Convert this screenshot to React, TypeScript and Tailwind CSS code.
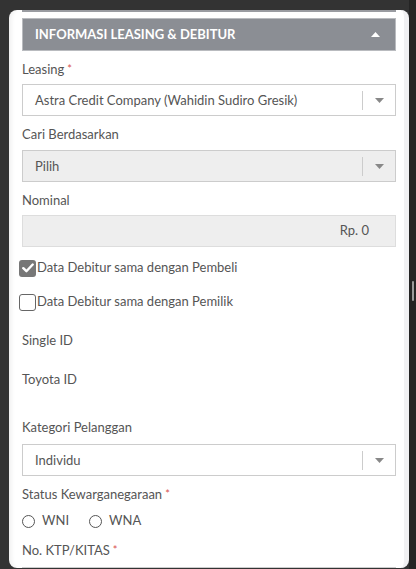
import React from "react";

const font = { fontFamily: "Lato, 'Noto Sans', sans-serif" };

function Caret() {
  return (
    <svg width="9" height="5" viewBox="0 0 9 5" className="block">
      <path d="M0 0 L9 0 L4.5 5 Z" fill="#888888" />
    </svg>
  );
}

function Label({ children, req, mt }: { children: React.ReactNode; req?: boolean; mt: string }) {
  return (
    <div className={`${mt} h-[18px] leading-[18px] text-[13px] text-[#555555]`}>
      {children}
      {req && <span className="text-[#d9534f] text-[11px] ml-[3px] align-top">*</span>}
    </div>
  );
}

function Select({ value, disabled, mt }: { value: string; disabled?: boolean; mt: string }) {
  return (
    <div
      className={`${mt} h-[32px] flex items-center border border-[#cccccc] ${disabled ? "bg-[#eeeeee]" : "bg-white"}`}
    >
      <div className="flex-1 pl-[12px] text-[13px] text-[#555555] leading-none">{value}</div>
      <div className="w-px h-[19px] bg-[#cccccc]" />
      <div className="w-[32px] flex justify-center">
        <Caret />
      </div>
    </div>
  );
}

export default function App() {
  return (
    <div className="w-[416px] h-[569px] bg-[#333333] relative overflow-hidden" style={font}>
      <div className="absolute right-0 top-0 w-[7px] h-[569px] bg-[#242424]">
        <div className="absolute left-[3px] top-[281px] w-[2px] h-[20px] bg-[#9a9a9a] rounded-sm" />
      </div>
      <div className="ml-[9px] pt-[10px]">
        <div className="w-[400px] h-[558px] bg-white rounded-[8px] border-r-[5px] border-[#f1f1f3] pl-[13px] pr-[8px] shadow-[inset_5px_0_5px_-3px_rgba(0,0,0,0.07)] overflow-hidden">
          <div className="h-[2px] bg-[#9a9ca1]" />
          <div className="mt-[6px] h-[33px] bg-[#8b8e94] flex items-center justify-between pl-[12px] pr-[15px] border border-[#b9bbbf]">
            <span className="text-white font-bold text-[13px] tracking-[0px]">INFORMASI LEASING &amp; DEBITUR</span>
            <svg width="9" height="5" viewBox="0 0 9 5" className="block">
              <path d="M0 5 L9 5 L4.5 0 Z" fill="#ffffff" />
            </svg>
          </div>

          <Label req mt="mt-[9px]">Leasing</Label>
          <Select mt="mt-[6px]" value="Astra Credit Company (Wahidin Sudiro Gresik)" />

          <Label mt="mt-[9px]">Cari Berdasarkan</Label>
          <Select mt="mt-[7px]" value="Pilih" disabled />

          <Label mt="mt-[9px]">Nominal</Label>
          <div className="mt-[6px] h-[32px] border border-[#dddddd] bg-[#eeeeee] flex items-center justify-end pr-[26px] text-[13px] text-[#555555]">
            Rp. 0
          </div>

          <div className="mt-[12px] h-[18px] flex items-center -ml-[3px]">
            <div className="w-[17px] h-[17px] rounded-[3px] bg-[#777777] flex items-center justify-center">
              <svg width="12" height="10" viewBox="0 0 12 10">
                <path d="M1.3 5.2 L4.4 8.2 L10.7 1.5" stroke="#ffffff" strokeWidth="2.4" fill="none" strokeLinecap="round" strokeLinejoin="round" />
              </svg>
            </div>
            <span className="ml-[1px] text-[13px] text-[#555555]">Data Debitur sama dengan Pembeli</span>
          </div>

          <div className="mt-[16px] h-[18px] flex items-center -ml-[3px]">
            <div className="w-[17px] h-[17px] rounded-[3px] border-[1.5px] border-[#666666] bg-white" />
            <span className="ml-[1px] text-[13px] text-[#555555]">Data Debitur sama dengan Pemilik</span>
          </div>

          <Label mt="mt-[20px]">Single ID</Label>
          <Label mt="mt-[21px]">Toyota ID</Label>

          <Label mt="mt-[30px]">Kategori Pelanggan</Label>
          <Select mt="mt-[8px]" value="Individu" />

          <Label req mt="mt-[9px]">Status Kewarganegaraan</Label>

          <div className="mt-[9px] h-[18px] flex items-center text-[13px] text-[#555555]">
            <div className="w-[13px] h-[13px] rounded-full border border-[#555555]" />
            <span className="ml-[7px]">WNI</span>
            <div className="ml-[20px] w-[13px] h-[13px] rounded-full border border-[#555555]" />
            <span className="ml-[7px]">WNA</span>
          </div>

          <Label req mt="mt-[11px]">No. KTP/KITAS</Label>
          <div className="mt-[8px] h-[32px] border border-[#cccccc] bg-white" />
        </div>
      </div>
    </div>
  );
}
